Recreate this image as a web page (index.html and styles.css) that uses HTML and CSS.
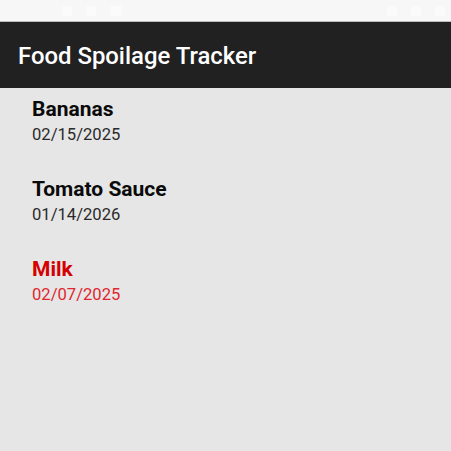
FILE: index.html
```html
<!DOCTYPE html>
<html>
<head>
<meta charset="utf-8">
<link rel="stylesheet" href="styles.css">
</head>
<body>
<div class="status-bar">
  <div class="status-left">
    <span class="sb-time"></span>
    <span class="sb-icon"></span>
    <span class="sb-icon"></span>
    <span class="sb-icon wide"></span>
  </div>
  <div class="status-right">
    <span class="sb-icon"></span>
    <span class="sb-icon"></span>
    <span class="sb-icon"></span>
  </div>
</div>
<header class="app-bar">
  <h1 class="title">Food Spoilage Tracker</h1>
</header>
<main class="list">
  <div class="item">
    <div class="name">Bananas</div>
    <div class="date">02/15/2025</div>
  </div>
  <div class="item">
    <div class="name">Tomato Sauce</div>
    <div class="date">01/14/2026</div>
  </div>
  <div class="item expired">
    <div class="name">Milk</div>
    <div class="date">02/07/2025</div>
  </div>
</main>
</body>
</html>
```
FILE: styles.css
```css
html, body {
  margin: 0;
  padding: 0;
  height: 100%;
}
body {
  background: #e6e6e6;
  font-family: Roboto, "Liberation Sans", sans-serif;
  display: flex;
  flex-direction: column;
}
.status-bar {
  height: 21px;
  background: #f7f7f7;
  border-bottom: 1px solid #bdbdbd;
  display: flex;
  justify-content: space-between;
  align-items: center;
  padding: 0 6px 0 18px;
  box-sizing: content-box;
}
.status-left, .status-right {
  display: flex;
  gap: 14px;
  align-items: center;
}
.sb-icon {
  width: 10px;
  height: 10px;
  background: #fbfbfb;
  border-radius: 2px;
}
.sb-icon.wide { width: 12px; }
.sb-time {
  width: 30px;
  height: 8px;
}
.app-bar {
  height: 66px;
  background: #212121;
  display: flex;
  align-items: center;
  padding: 0 18px;
}
.title {
  margin: 0;
  color: #ffffff;
  font-size: 23.9px;
  font-weight: 500;
  line-height: 28px;
  padding-top: 1px;
}
.list {
  flex: 1;
  display: flex;
  flex-direction: column;
  padding: 9px 32px 0;
  gap: 31px;
}
.item {
  display: flex;
  flex-direction: column;
  gap: 3px;
}
.name {
  font-size: 21px;
  font-weight: 700;
  color: #0a0a0a;
  line-height: 24px;
}
.date {
  font-size: 16.6px;
  color: #2a2a2a;
  line-height: 22px;
}
.expired .name { color: #d50000; }
.expired .date { color: #e0262e; }
```
